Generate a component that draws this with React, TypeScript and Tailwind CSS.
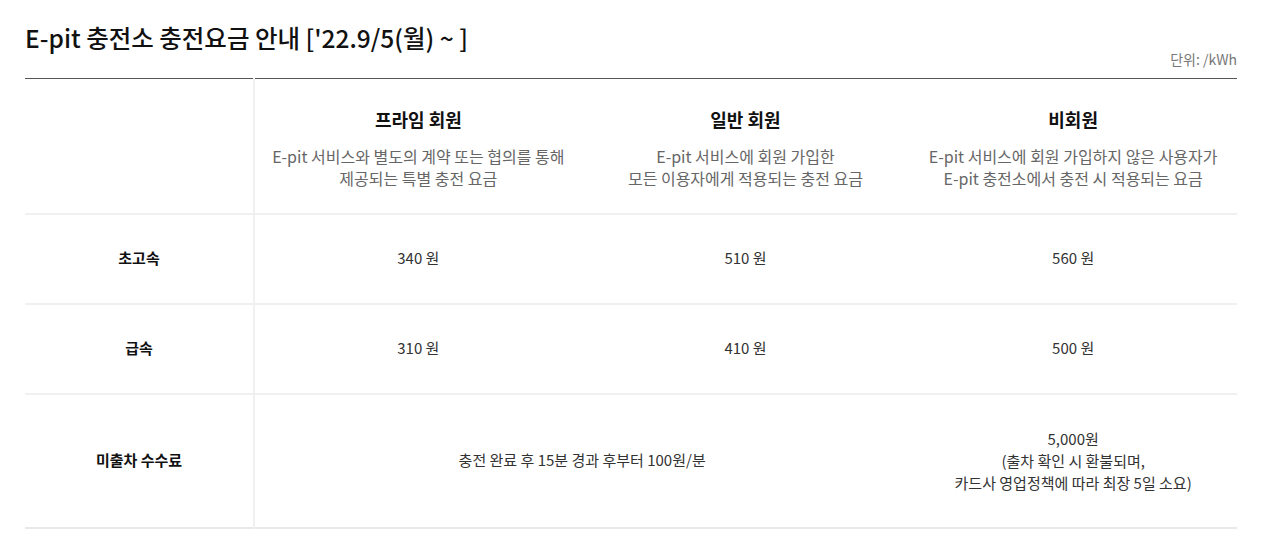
import React from 'react';

const font = { fontFamily: '"Noto Sans CJK KR", "Noto Sans", sans-serif' };

const plans = [
  {
    name: '프라임 회원',
    desc: ['E-pit 서비스와 별도의 계약 또는 협의를 통해', '제공되는 특별 충전 요금'],
  },
  {
    name: '일반 회원',
    desc: ['E-pit 서비스에 회원 가입한', '모든 이용자에게 적용되는 충전 요금'],
  },
  {
    name: '비회원',
    desc: ['E-pit 서비스에 회원 가입하지 않은 사용자가', 'E-pit 충전소에서 충전 시 적용되는 요금'],
  },
];

const rates = [
  { label: '초고속', values: ['340 원', '510 원', '560 원'] },
  { label: '급속', values: ['310 원', '410 원', '500 원'] },
];

export default function App() {
  return (
    <div className="w-[1269px] h-[533px] bg-white pl-[25px] pr-[32px] pt-[22px]" style={font}>
      {/* Title + unit */}
      <div className="flex items-end justify-between h-[48px]">
        <h2 className="text-[24.5px] font-medium text-[#111] leading-[32px] self-start">
          E-pit 충전소 충전요금 안내 ['22.9/5(월) ~ ]
        </h2>
        <span className="text-[14px] text-[#777] leading-[18px] mb-[2px]">단위: /kWh</span>
      </div>

      <table className="w-full border-collapse table-fixed border-t border-t-[#555] mt-[8px]">
        <colgroup>
          <col className="w-[229px]" />
          <col />
          <col />
          <col />
        </colgroup>
        <tbody>
          {/* Header row */}
          <tr className="h-[135px] border-b-2 border-b-[#f0f0f0]">
            <td className="border-r-2 border-r-[#f0f0f0]" />
            {plans.map((p) => (
              <td key={p.name} className="text-center align-top pt-[26px]">
                <div className="text-[18px] font-bold text-[#111] leading-[28px]">{p.name}</div>
                <div className="mt-[12px] text-[16px] text-[#666] leading-[22px]">
                  {p.desc.map((d) => (
                    <div key={d}>{d}</div>
                  ))}
                </div>
              </td>
            ))}
          </tr>

          {rates.map((r) => (
            <tr key={r.label} className="h-[90px] border-b-2 border-b-[#f0f0f0]">
              <td className="border-r-2 border-r-[#f0f0f0] text-center text-[15px] font-bold text-[#111]">
                {r.label}
              </td>
              {r.values.map((v) => (
                <td key={v} className="text-center text-[15px] text-[#333]">
                  {v}
                </td>
              ))}
            </tr>
          ))}

          <tr className="h-[134px] border-b-2 border-b-[#e8e8e8]">
            <td className="border-r-2 border-r-[#f0f0f0] text-center text-[15px] font-bold text-[#111]">
              미출차 수수료
            </td>
            <td colSpan={2} className="text-center text-[15px] text-[#333]">
              충전 완료 후 15분 경과 후부터 100원/분
            </td>
            <td className="text-center text-[15px] text-[#333] leading-[22px]">
              <div>5,000원</div>
              <div>(출차 확인 시 환불되며,</div>
              <div>카드사 영업정책에 따라 최장 5일 소요)</div>
            </td>
          </tr>
        </tbody>
      </table>
    </div>
  );
}
